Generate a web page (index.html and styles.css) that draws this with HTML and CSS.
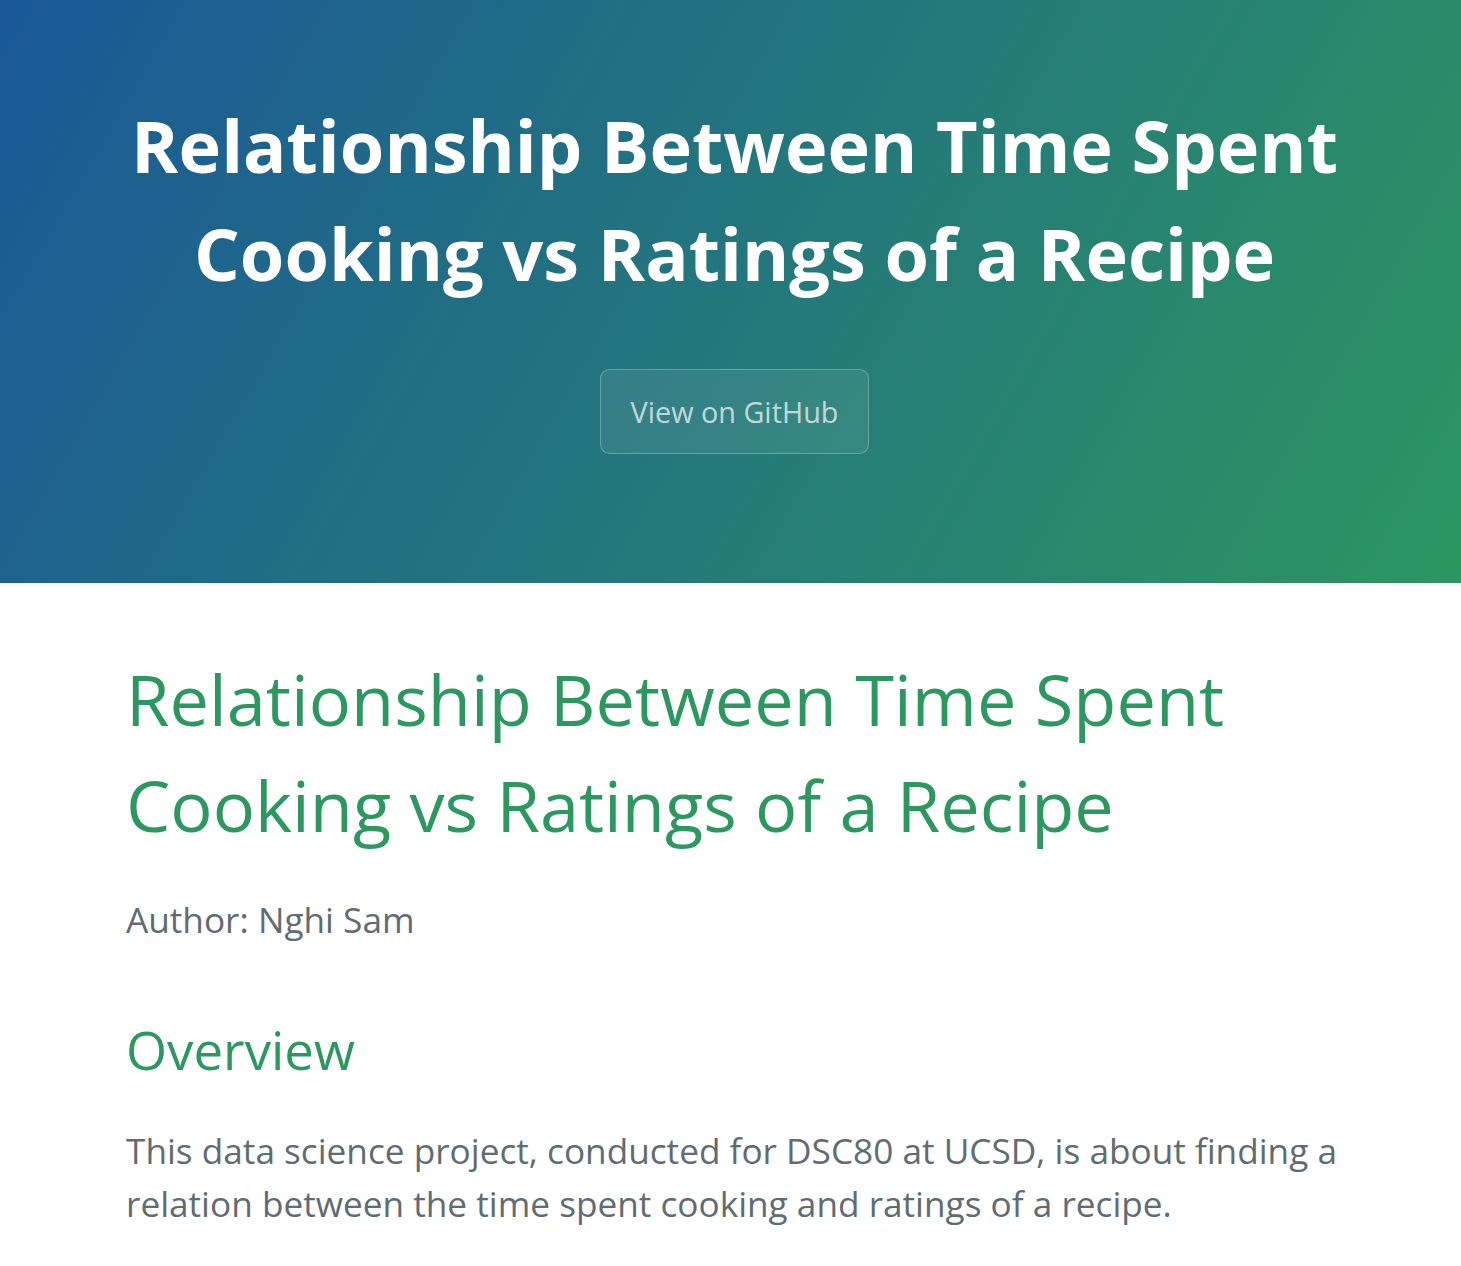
FILE: index.html
```html
<!DOCTYPE html>
<html lang="en">
<head>
<meta charset="utf-8">
<title>Relationship Between Time Spent Cooking vs Ratings of a Recipe</title>
<link rel="stylesheet" href="styles.css">
</head>
<body>
<section class="page-header">
  <h1 class="project-name">Relationship Between Time Spent Cooking vs Ratings of a Recipe</h1>
  <h2 class="project-tagline"></h2>
  <a class="btn" href="#">View on GitHub</a>
</section>
<main class="main-content">
  <h1>Relationship Between Time Spent Cooking vs Ratings of a Recipe</h1>
  <p>Author: Nghi Sam</p>
  <h2>Overview</h2>
  <p>This data science project, conducted for DSC80 at UCSD, is about finding a relation between the time spent cooking and ratings of a recipe.</p>
</main>
</body>
</html>
```
FILE: styles.css
```css
html {
  font-size: 32px;
}
body {
  margin: 0;
  padding: 0;
  font-family: "Open Sans", "Helvetica Neue", Helvetica, Arial, sans-serif;
  font-size: 1rem;
  line-height: 1.5;
  color: #606c71;
  background: #fff;
}
.page-header {
  color: #fff;
  text-align: center;
  background-color: #2b9660;
  background-image: linear-gradient(120deg, #1a5898, #2d9660);
  padding: 91px 96px 97px 104px;
}
.project-name {
  margin-top: 0;
  margin-bottom: 0.1rem;
  font-size: 2.25rem;
  font-weight: 700;
}
.project-tagline {
  margin-top: 0;
  margin-bottom: 62px;
  font-weight: normal;
  opacity: 0.7;
  font-size: 1.15rem;
}
.btn {
  display: inline-block;
  margin-bottom: 1rem;
  color: rgba(255, 255, 255, 0.7);
  background-color: rgba(255, 255, 255, 0.08);
  border: 1px solid rgba(255, 255, 255, 0.25);
  border-radius: 0.3rem;
  padding: 20px 30px;
  font-size: 0.9rem;
  text-decoration: none;
}
.main-content {
  max-width: 64rem;
  padding: 2rem 110px 2rem 126px;
  margin: 0 auto;
  font-size: 1.1rem;
  word-wrap: break-word;
}
.main-content h1,
.main-content h2 {
  margin-top: 2rem;
  margin-bottom: 1rem;
  font-weight: normal;
  color: #2b995f;
}
.main-content h1 {
  font-size: 2em;
  margin-top: 0;
  margin-bottom: 35px;
}
.main-content h2 {
  font-size: 1.5em;
  margin-bottom: 35px;
}
.main-content p {
  margin-top: 0;
  margin-bottom: 1rem;
}
```
